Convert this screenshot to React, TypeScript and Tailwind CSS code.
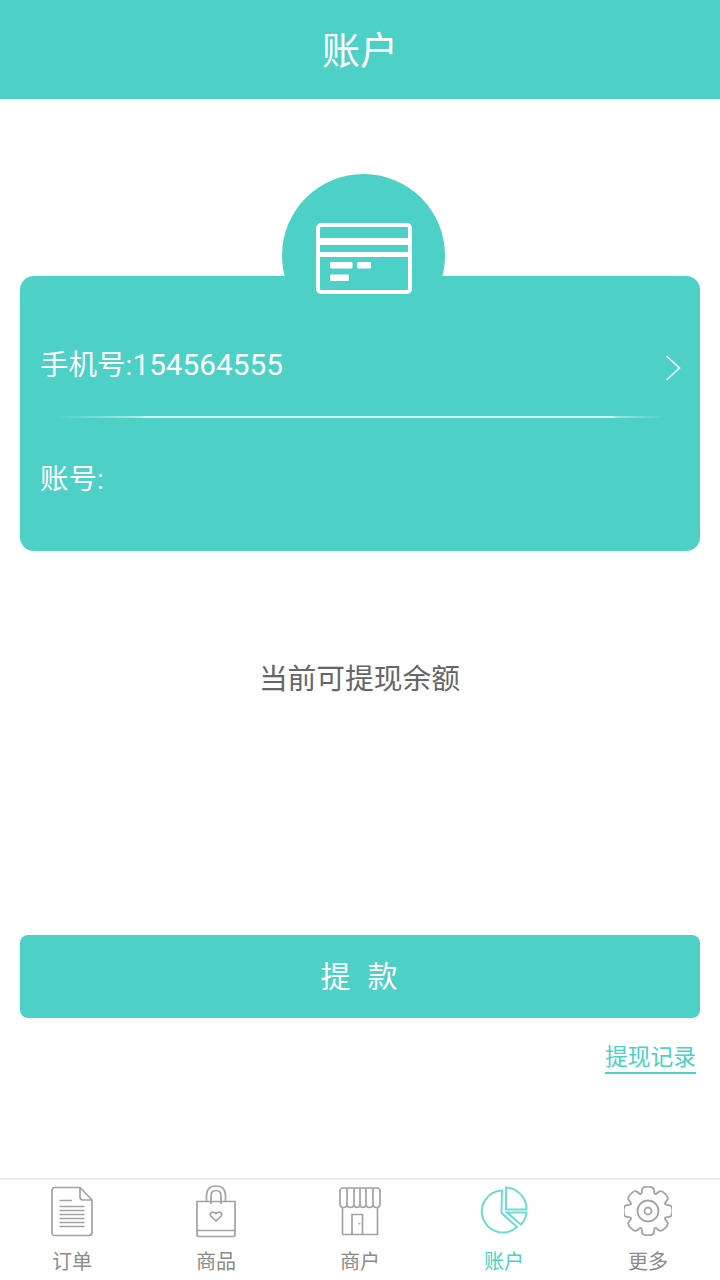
const FONT = "font-['Roboto','Noto_Sans_CJK_SC',sans-serif]";

function DocIcon() {
  return (
    <svg width="42" height="51" viewBox="0 0 42 51" fill="none" stroke="#a3a3a3" strokeWidth="1.7">
      <path d="M4 1.5H29L41 14V46.5Q41 49.5 38 49.5H4Q1 49.5 1 46.5V4.5Q1 1.5 4 1.5Z" />
      <path d="M29 1.5V11Q29 14 32 14H41" />
      <path d="M8.5 14.5H21M8.5 20.5H33.5M8.5 24.5H33.5M8.5 28.5H33.5M8.5 32.5H33.5M8.5 36.5H33.5M8.5 40.5H33.5" strokeWidth="1.4" />
    </svg>
  );
}

function BagIcon() {
  return (
    <svg width="42" height="54" viewBox="0 0 42 54" fill="none" stroke="#a3a3a3" strokeWidth="1.7">
      <path d="M2 17.5H40V50.5Q40 52.5 38 52.5H4Q2 52.5 2 50.5Z" />
      <path d="M2 46.5H40" />
      <path d="M11.5 17V12Q11.5 2 21 2Q30.5 2 30.5 12V17" />
      <path d="M16 20V12Q16 6.5 21 6.5Q26 6.5 26 12V20" />
      <path d="M21 37L15.8 32Q14.6 30 16.2 28.6Q18.4 27.2 21 29.5Q23.6 27.2 25.8 28.6Q27.4 30 26.2 32Z" />
    </svg>
  );
}

function ShopIcon() {
  return (
    <svg width="42" height="49" viewBox="0 0 42 49" fill="none" stroke="#a3a3a3" strokeWidth="1.7">
      <path d="M4 1H38Q41 1 41 4V17Q41 20.5 37.5 20.5Q34 20.5 34 17Q34 20.5 30.5 20.5Q27 20.5 27 17Q27 20.5 24 20.5Q21 20.5 21 17Q21 20.5 18 20.5Q15 20.5 15 17Q15 20.5 11.5 20.5Q8 20.5 8 17Q8 20.5 4.5 20.5Q1 20.5 1 17V4Q1 1 4 1Z" />
      <path d="M8 1V17M15 1V17M21 1V17M27 1V17M34 1V17" />
      <path d="M3.5 20.5V47.5H38.5V20.5" />
      <path d="M13 47.5V27.5H23.5V47.5" />
      <path d="M20.5 36V37.5" />
    </svg>
  );
}

function PieIcon() {
  return (
    <svg width="48" height="50" viewBox="0 0 48 50" fill="none" stroke="#6fdcd1" strokeWidth="2">
      <path d="M22 4.5A21 21 0 1 0 37 41L21.5 27Z" />
      <path d="M26 1.5A21.5 21.5 0 0 1 46.5 23.5H26Z" />
      <path d="M27 26.5H46.5A21 21 0 0 1 41 38.5Z" />
    </svg>
  );
}

function gearPath() {
  const pts: [number, number][] = [];
  for (let k = 0; k < 8; k++) {
    const a = (k * Math.PI) / 4 - Math.PI / 2;
    const spec: [number, number][] = [
      [18.5, -0.33],
      [25, -0.24],
      [25, 0.24],
      [18.5, 0.33],
    ];
    for (const [r, d] of spec) {
      pts.push([24 + r * Math.cos(a + d), 25 + r * Math.sin(a + d)]);
    }
  }
  const mid = (p: [number, number], q: [number, number]) =>
    `${((p[0] + q[0]) / 2).toFixed(2)} ${((p[1] + q[1]) / 2).toFixed(2)}`;
  let d = `M${mid(pts[pts.length - 1], pts[0])}`;
  pts.forEach((p, i) => {
    d += `Q${p[0].toFixed(2)} ${p[1].toFixed(2)} ${mid(p, pts[(i + 1) % pts.length])}`;
  });
  return d + "Z";
}

function GearIcon() {
  return (
    <svg width="48" height="50" viewBox="0 0 48 50" fill="none" stroke="#a3a3a3" strokeWidth="1.8">
      <path d={gearPath()} />
      <circle cx="24" cy="25" r="10.5" />
      <circle cx="24" cy="25" r="3.5" />
    </svg>
  );
}

const tabs = [
  { label: "订单", icon: <DocIcon />, active: false },
  { label: "商品", icon: <BagIcon />, active: false },
  { label: "商户", icon: <ShopIcon />, active: false },
  { label: "账户", icon: <PieIcon />, active: true },
  { label: "更多", icon: <GearIcon />, active: false },
];

export default function App() {
  return (
    <div className={`${FONT} flex h-[1280px] w-[720px] flex-col overflow-hidden bg-white`}>
      <header className="flex h-[99px] shrink-0 items-center justify-center bg-[#4dd0c6] pt-1 text-[38px] text-white">
        账户
      </header>

      <main className="flex flex-1 flex-col">
        <section className="relative mx-5 mt-[177px] h-[275px] rounded-[14px] bg-[#4dd0c6] text-[28.5px] text-white">
          <div className="absolute left-[262px] top-[-102px] flex h-[163px] w-[163px] justify-center rounded-full bg-[#4dd0c6]">
            <svg className="mt-[49px]" width="96" height="71" viewBox="0 0 96 71" fill="none">
              <rect x="2" y="2" width="92" height="67" rx="3" stroke="white" strokeWidth="4" />
              <rect x="2" y="15" width="92" height="7" fill="white" />
              <rect x="2" y="29" width="92" height="5" fill="white" />
              <rect x="14" y="39" width="22.5" height="6.5" rx="1" fill="white" />
              <rect x="41" y="39" width="14" height="6.5" rx="1" fill="white" />
              <rect x="14" y="51.5" width="19" height="6.5" rx="1" fill="white" />
            </svg>
          </div>
          <div className="flex h-[140px] items-center justify-between pl-5 pr-[19px] pt-[39px]">
            <span>
              手机号:<span className="text-[29.75px]">154564555</span>
            </span>
            <svg width="16" height="26" viewBox="0 0 16 26" fill="none" stroke="white" strokeWidth="1.6" className="translate-y-[2px]">
              <path d="M1.5 1L14.5 13L1.5 25" />
            </svg>
          </div>
          <div className="mx-[34px] h-[2px] bg-[linear-gradient(90deg,rgba(255,255,255,0)_0%,rgba(255,255,255,0.55)_14%,rgba(255,255,255,0.75)_15%,rgba(255,255,255,0.75)_91%,rgba(255,255,255,0.45)_92%,rgba(255,255,255,0)_100%)]" />
          <div className="flex h-[122px] items-center pl-5 pt-[2px]">账号:</div>
        </section>

        <p className="mt-[108px] pr-[1px] text-center text-[28.75px] leading-[40px] text-[#666666]">当前可提现余额</p>

        <button className="mx-5 mt-[236px] flex h-[83px] items-center justify-center gap-[17px] rounded-[8px] bg-[#4dd0c6] pr-[2px] text-[30px] text-white">
          <span>提</span>
          <span>款</span>
        </button>

        <div className="mr-6 mt-[26px] flex justify-end">
          <span className="border-b-2 border-[#4dd0c6] text-[22.75px] leading-[28px] text-[#4dd0c6]">提现记录</span>
        </div>
      </main>

      <nav className="grid h-[102px] shrink-0 grid-cols-5 border-t-2 border-[#ececec]">
        {tabs.map((t) => (
          <div key={t.label} className="flex flex-col items-center">
            <div className="mt-[4px] flex h-[54px] items-center justify-center">{t.icon}</div>
            <span className={`mt-[10px] text-[20px] leading-[28px] ${t.active ? "text-[#4dd0c6]" : "text-[#8a8a8a]"}`}>
              {t.label}
            </span>
          </div>
        ))}
      </nav>
    </div>
  );
}
